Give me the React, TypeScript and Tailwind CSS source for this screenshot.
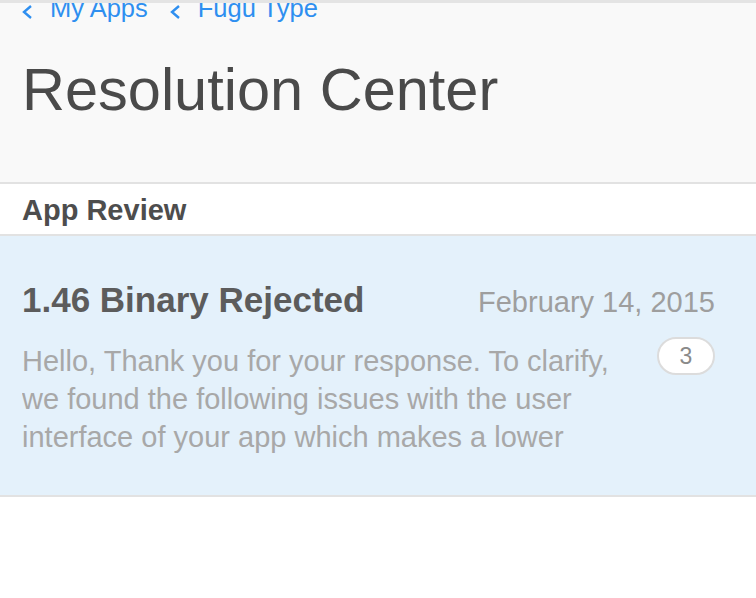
import React from "react";

function Chevron() {
  return (
    <svg width="11" height="14" viewBox="0 0 11 14" className="mt-[12px] shrink-0 self-start">
      <polyline points="9,1 2,7 9,13" fill="none" stroke="#2e8ff0" strokeWidth="2.4" />
    </svg>
  );
}

function Crumb({ label }: { label: string }) {
  return (
    <div className="flex h-full items-center gap-[17px]">
      <Chevron />
      <span>{label}</span>
    </div>
  );
}

export default function App() {
  return (
    <main className="relative min-h-[598px] bg-white font-['Liberation_Sans',Arial,sans-serif]">
      <div className="absolute left-0 right-0 top-0 h-[3px] bg-[#e4e4e4]" />
      <header className="overflow-hidden bg-[#f9f9f9] pl-[22px] pb-[62px]">
        <nav className="-mt-[7px] flex h-[30px] items-center gap-[22px] text-[25.5px] leading-[30px] text-[#2e8ff0]">
          <Crumb label="My Apps" />
          <Crumb label="Fugu Type" />
        </nav>
        <h1 className="mt-[37px] text-[59.5px] leading-[60px] text-[#4a4a4a]">Resolution Center</h1>
      </header>
      <div className="h-[2px] bg-[#e2e2e2]" />
      <section className="flex h-[50px] items-start bg-white pl-[22px] pt-[1px]">
        <h2 className="text-[29px] font-bold leading-[50px] text-[#4d4d4d]">App Review</h2>
      </section>
      <div className="h-[2px] bg-[#e2e2e2]" />
      <section className="bg-[#e4f1fb] pl-[22px] pr-[41px] pt-[44px] pb-[39px]">
        <div className="flex items-baseline justify-between">
          <h3 className="text-[35px] font-bold leading-[40px] text-[#5c5c5c]">1.46 Binary Rejected</h3>
          <span className="text-[29px] leading-[40px] text-[#9e9e9e]">February 14, 2015</span>
        </div>
        <div className="mt-[20px] flex items-start justify-between">
          <p className="h-[114px] w-[612px] overflow-hidden text-[29px] leading-[38px] text-[#a8a8a8]">
            Hello, Thank you for your response. To clarify, we found the following issues with the user
            interface of your app which makes a lower quality experience than expected.
          </p>
          <span className="-mt-[5px] flex h-[38px] w-[58px] shrink-0 items-center justify-center rounded-full border-2 border-[#dcdcdc] bg-white text-[23px] text-[#8a8a8a]">
            3
          </span>
        </div>
      </section>
      <div className="h-[2px] bg-[#e2e2e2]" />
    </main>
  );
}
